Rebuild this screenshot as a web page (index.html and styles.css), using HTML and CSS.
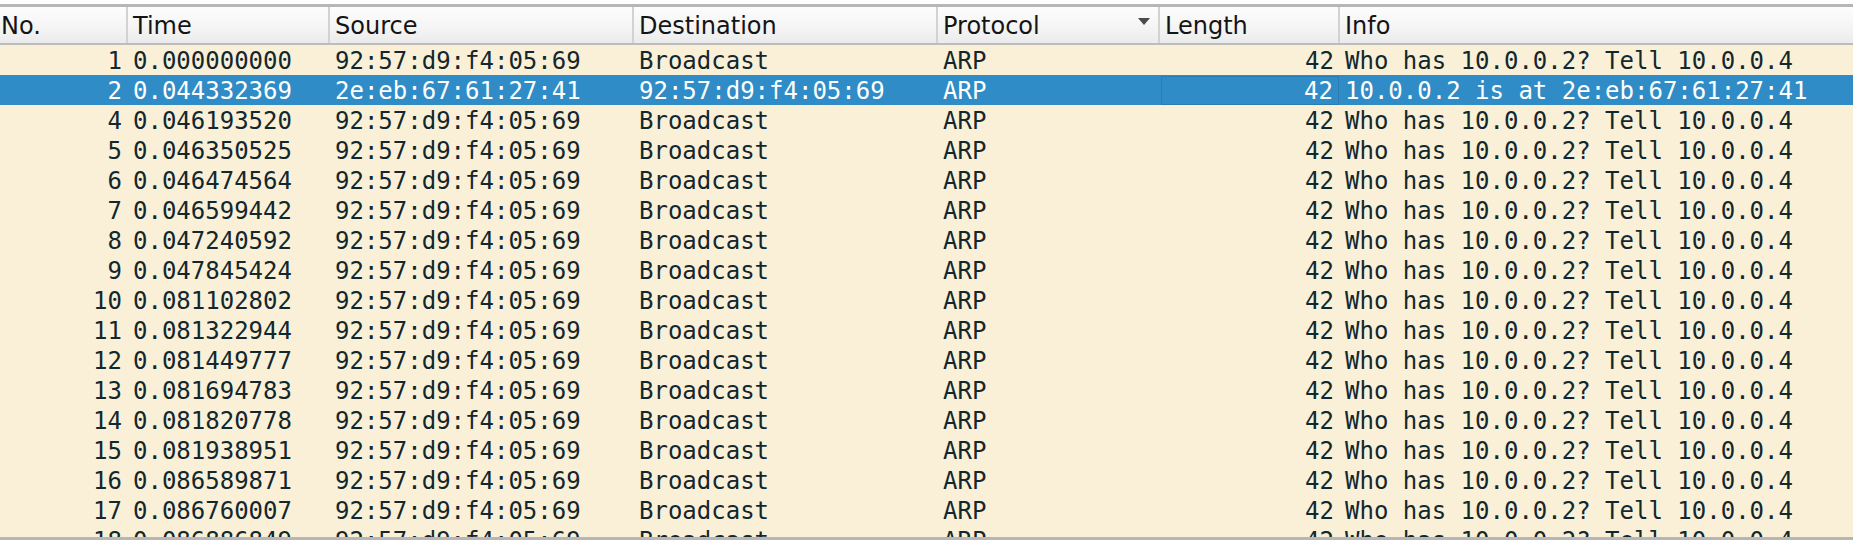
FILE: index.html
```html
<!DOCTYPE html>
<html>
<head>
<meta charset="utf-8">
<link rel="stylesheet" href="styles.css">
</head>
<body>
<div class="pane">
  <div class="list">
    <div class="row head">
      <div class="hc first">No.</div>
      <div class="hc">Time</div>
      <div class="hc">Source</div>
      <div class="hc">Destination</div>
      <div class="hc sorted">Protocol<span class="arrow"></span></div>
      <div class="hc">Length</div>
      <div class="hc last">Info</div>
    </div>
    <div class="row pkt"><div class="c num">1</div><div class="c">0.000000000</div><div class="c">92:57:d9:f4:05:69</div><div class="c">Broadcast</div><div class="c">ARP</div><div class="c num">42</div><div class="c">Who has 10.0.0.2? Tell 10.0.0.4</div></div>
    <div class="row pkt sel"><div class="c num">2</div><div class="c">0.044332369</div><div class="c">2e:eb:67:61:27:41</div><div class="c">92:57:d9:f4:05:69</div><div class="c">ARP</div><div class="c num focus">42</div><div class="c">10.0.0.2 is at 2e:eb:67:61:27:41</div></div>
    <div class="row pkt"><div class="c num">4</div><div class="c">0.046193520</div><div class="c">92:57:d9:f4:05:69</div><div class="c">Broadcast</div><div class="c">ARP</div><div class="c num">42</div><div class="c">Who has 10.0.0.2? Tell 10.0.0.4</div></div>
    <div class="row pkt"><div class="c num">5</div><div class="c">0.046350525</div><div class="c">92:57:d9:f4:05:69</div><div class="c">Broadcast</div><div class="c">ARP</div><div class="c num">42</div><div class="c">Who has 10.0.0.2? Tell 10.0.0.4</div></div>
    <div class="row pkt"><div class="c num">6</div><div class="c">0.046474564</div><div class="c">92:57:d9:f4:05:69</div><div class="c">Broadcast</div><div class="c">ARP</div><div class="c num">42</div><div class="c">Who has 10.0.0.2? Tell 10.0.0.4</div></div>
    <div class="row pkt"><div class="c num">7</div><div class="c">0.046599442</div><div class="c">92:57:d9:f4:05:69</div><div class="c">Broadcast</div><div class="c">ARP</div><div class="c num">42</div><div class="c">Who has 10.0.0.2? Tell 10.0.0.4</div></div>
    <div class="row pkt"><div class="c num">8</div><div class="c">0.047240592</div><div class="c">92:57:d9:f4:05:69</div><div class="c">Broadcast</div><div class="c">ARP</div><div class="c num">42</div><div class="c">Who has 10.0.0.2? Tell 10.0.0.4</div></div>
    <div class="row pkt"><div class="c num">9</div><div class="c">0.047845424</div><div class="c">92:57:d9:f4:05:69</div><div class="c">Broadcast</div><div class="c">ARP</div><div class="c num">42</div><div class="c">Who has 10.0.0.2? Tell 10.0.0.4</div></div>
    <div class="row pkt"><div class="c num">10</div><div class="c">0.081102802</div><div class="c">92:57:d9:f4:05:69</div><div class="c">Broadcast</div><div class="c">ARP</div><div class="c num">42</div><div class="c">Who has 10.0.0.2? Tell 10.0.0.4</div></div>
    <div class="row pkt"><div class="c num">11</div><div class="c">0.081322944</div><div class="c">92:57:d9:f4:05:69</div><div class="c">Broadcast</div><div class="c">ARP</div><div class="c num">42</div><div class="c">Who has 10.0.0.2? Tell 10.0.0.4</div></div>
    <div class="row pkt"><div class="c num">12</div><div class="c">0.081449777</div><div class="c">92:57:d9:f4:05:69</div><div class="c">Broadcast</div><div class="c">ARP</div><div class="c num">42</div><div class="c">Who has 10.0.0.2? Tell 10.0.0.4</div></div>
    <div class="row pkt"><div class="c num">13</div><div class="c">0.081694783</div><div class="c">92:57:d9:f4:05:69</div><div class="c">Broadcast</div><div class="c">ARP</div><div class="c num">42</div><div class="c">Who has 10.0.0.2? Tell 10.0.0.4</div></div>
    <div class="row pkt"><div class="c num">14</div><div class="c">0.081820778</div><div class="c">92:57:d9:f4:05:69</div><div class="c">Broadcast</div><div class="c">ARP</div><div class="c num">42</div><div class="c">Who has 10.0.0.2? Tell 10.0.0.4</div></div>
    <div class="row pkt"><div class="c num">15</div><div class="c">0.081938951</div><div class="c">92:57:d9:f4:05:69</div><div class="c">Broadcast</div><div class="c">ARP</div><div class="c num">42</div><div class="c">Who has 10.0.0.2? Tell 10.0.0.4</div></div>
    <div class="row pkt"><div class="c num">16</div><div class="c">0.086589871</div><div class="c">92:57:d9:f4:05:69</div><div class="c">Broadcast</div><div class="c">ARP</div><div class="c num">42</div><div class="c">Who has 10.0.0.2? Tell 10.0.0.4</div></div>
    <div class="row pkt"><div class="c num">17</div><div class="c">0.086760007</div><div class="c">92:57:d9:f4:05:69</div><div class="c">Broadcast</div><div class="c">ARP</div><div class="c num">42</div><div class="c">Who has 10.0.0.2? Tell 10.0.0.4</div></div>
    <div class="row pkt"><div class="c num">18</div><div class="c">0.086886849</div><div class="c">92:57:d9:f4:05:69</div><div class="c">Broadcast</div><div class="c">ARP</div><div class="c num">42</div><div class="c">Who has 10.0.0.2? Tell 10.0.0.4</div></div>
  </div>
</div>
</body>
</html>
```

FILE: styles.css
```css
html, body {
  margin: 0;
  padding: 0;
  background: #ffffff;
}

.pane {
  padding-top: 4px;
  height: 540px;
  box-sizing: border-box;
}

.list {
  height: 536px;
  box-sizing: border-box;
  border-top: 3px solid #b6b6b6;
  border-bottom: 3px solid #b6b6b6;
  overflow: hidden;
  background: #faf0d7;
}

.row {
  display: grid;
  grid-template-columns: 128px 202px 304px 304px 222px 180px 1fr;
}

.head {
  height: 38px;
  box-sizing: border-box;
  border-bottom: 2px solid #bcbcbc;
  background: linear-gradient(to bottom, #fdfdfd 0%, #f4f4f4 60%, #ebebeb 100%);
  font-family: "DejaVu Sans", sans-serif;
  font-size: 24px;
  color: #141414;
}

.hc {
  display: flex;
  align-items: center;
  padding: 3px 5px 0 5px;
  border-right: 2px solid #d2d2d2;
  white-space: nowrap;
  overflow: hidden;
  line-height: 33px;
}

.hc.first {
  padding-left: 1px;
}

.hc.last {
  border-right: none;
}

.hc.sorted {
  justify-content: space-between;
}

.arrow {
  width: 0;
  height: 0;
  border-left: 6px solid transparent;
  border-right: 6px solid transparent;
  border-top: 7px solid #4a4a4a;
  margin-right: 3px;
  margin-top: -10px;
}

.pkt {
  height: 30px;
  font-family: "DejaVu Sans Mono", monospace;
  font-size: 24px;
  color: #12272e;
  background: #faf0d7;
}

.c {
  padding: 2px 5px 0 5px;
  white-space: nowrap;
  overflow: hidden;
  line-height: 28px;
}

.c.num {
  text-align: right;
  padding-right: 6px;
}

.pkt.sel {
  background: #308cc6;
  color: #ffffff;
}

.c.focus {
  margin: 1px 1px 0 1px;
  padding-top: 1px;
  line-height: 27px;
  border: 1px solid #2a7cb2;
  padding-right: 5px;
}
```
